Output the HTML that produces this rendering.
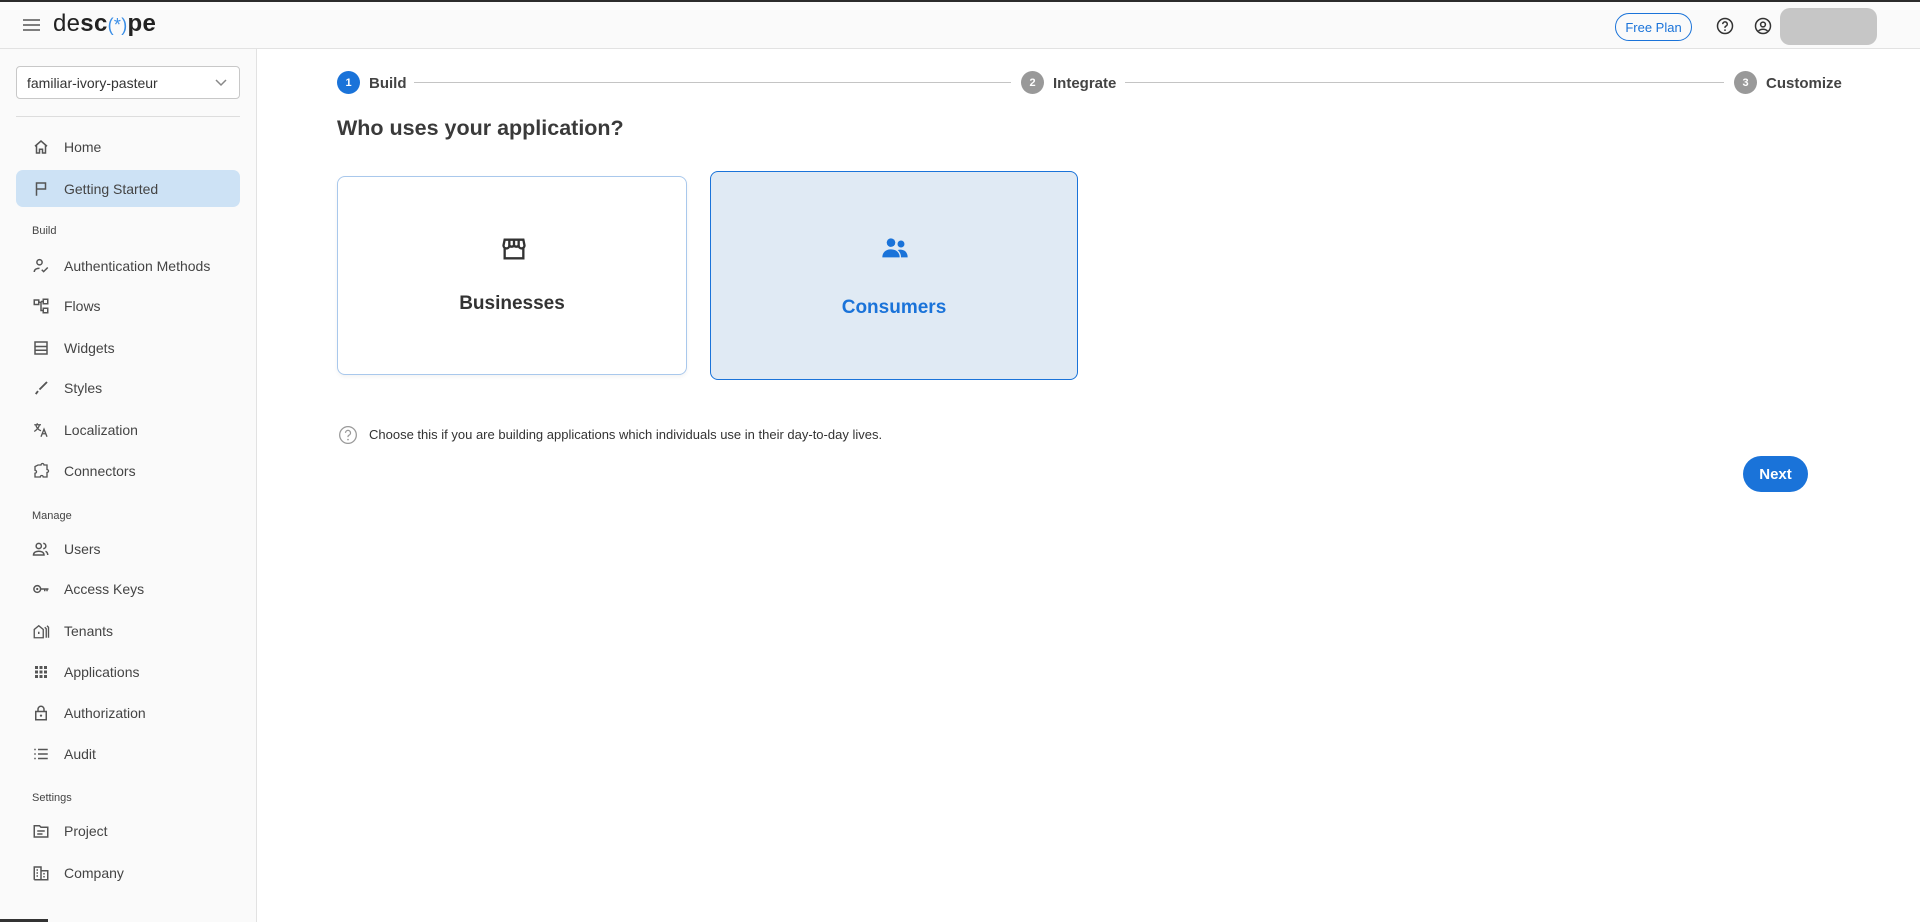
<!DOCTYPE html>
<html><head><meta charset="utf-8"><style>
*{box-sizing:border-box;margin:0;padding:0}
body{width:1920px;height:922px;overflow:hidden;background:#fff;font-family:"Liberation Sans",sans-serif;color:#3a3a3a;position:relative}
.top{position:absolute;left:0;top:0;width:1920px;height:49px;background:#fafafa;border-top:2px solid #2b2b2b;border-bottom:1px solid #e2e2e2}
.side{position:absolute;left:0;top:49px;width:257px;height:873px;background:#fafafa;border-right:1px solid #e2e2e2}
.abs{position:absolute}
.nav{position:absolute;left:40px;font-size:14px;color:#444;display:flex;align-items:center;height:20px}
.nav svg{width:18px;height:18px;margin-right:0;position:absolute;left:-8px}
.nav span{position:absolute;left:24px;white-space:nowrap}
.sec{position:absolute;left:32px;font-size:11px;color:#444}
.circ{position:absolute;width:23px;height:23px;border-radius:50%;color:#fff;font-size:11px;font-weight:bold;display:flex;align-items:center;justify-content:center;top:71px}
.stl{position:absolute;top:75px;font-size:15px;font-weight:bold;color:#444}
.line{position:absolute;top:82px;height:1px;background:#c4c4c4}
</style></head><body>
<div class="top">
  <svg class="abs" style="left:22px;top:16px" width="19" height="14" viewBox="0 0 19 14"><path d="M1 2h17M1 7h17M1 12h17" stroke="#555" stroke-width="1.6"/></svg>
  <div class="abs" style="left:53px;top:8px;font-size:24px;letter-spacing:0.3px;color:#222"><span style="font-weight:300">de</span><b>sc</b><span style="color:#3a8ee6;font-weight:300;font-size:18px">(*)</span><b>pe</b></div>
  <div class="abs" style="left:1615px;top:11px;width:77px;height:28px;border:1px solid #1a73d9;border-radius:14px;color:#1a73d9;font-size:13px;display:flex;align-items:center;justify-content:center">Free Plan</div>
  <svg class="abs" style="left:1716px;top:15px" width="18" height="18" viewBox="0 0 24 24"><circle cx="12" cy="12" r="10" fill="none" stroke="#333" stroke-width="2"/><path d="M9 9.5a3 3 0 1 1 4 2.8c-.8.4-1 1-1 1.7v.5" fill="none" stroke="#333" stroke-width="2"/><circle cx="12" cy="17.5" r="1.2" fill="#333"/></svg>
  <svg class="abs" style="left:1754px;top:15px" width="18" height="18" viewBox="0 0 24 24"><circle cx="12" cy="12" r="10" fill="none" stroke="#333" stroke-width="2"/><circle cx="12" cy="10" r="3.2" fill="none" stroke="#333" stroke-width="2"/><path d="M6 18.5c3-3 9-3 12 0" fill="none" stroke="#333" stroke-width="2"/></svg>
  <div class="abs" style="left:1780px;top:6px;width:97px;height:37px;border-radius:10px;background:#c6c6c6"></div>
</div>
<div class="side">
  <div class="abs" style="left:16px;top:17px;width:224px;height:33px;border:1px solid #c8c8c8;border-radius:4px;background:#fff;font-size:14px;color:#333;padding:8px 10px">familiar-ivory-pasteur
    <svg class="abs" style="right:12px;top:12px" width="12" height="8" viewBox="0 0 12 8"><path d="M1 1l5 5 5-5" fill="none" stroke="#888" stroke-width="1.5"/></svg></div>
  <div class="abs" style="left:16px;top:67px;width:224px;height:1px;background:#ddd"></div>
  <div class="abs" style="left:16px;top:121px;width:224px;height:37px;border-radius:7px;background:#cde2f5"></div>
</div>
<div class="nav" style="top:137px"><svg viewBox="0 0 24 24"><path d="M4 11l8-7 8 7M6 9.5V20h4v-5h4v5h4V9.5" fill="none" stroke="#555" stroke-width="2"/></svg><span>Home</span></div>
<div class="nav" style="top:179px"><svg viewBox="0 0 24 24"><path d="M6 21V4h12v8H7" fill="none" stroke="#555" stroke-width="2"/></svg><span>Getting Started</span></div>
<div class="sec" style="top:225px">Build</div>
<div class="nav" style="top:256px"><svg viewBox="0 0 24 24"><circle cx="10" cy="7" r="3.5" fill="none" stroke="#555" stroke-width="2"/><path d="M3 20c0-4 4-5 7-5M13 17l2.5 2.5L21 14" fill="none" stroke="#555" stroke-width="2"/></svg><span>Authentication Methods</span></div>
<div class="nav" style="top:296px"><svg viewBox="0 0 24 24"><path d="M3 4h6v6H3zM15 3h6v6h-6zM15 15h6v6h-6zM9 7h3v11h3M12 6h3" fill="none" stroke="#555" stroke-width="2"/></svg><span>Flows</span></div>
<div class="nav" style="top:338px"><svg viewBox="0 0 24 24"><rect x="4" y="4" width="16" height="16" fill="none" stroke="#555" stroke-width="2"/><path d="M4 10h16M4 15h16" stroke="#555" stroke-width="2"/></svg><span>Widgets</span></div>
<div class="nav" style="top:378px"><svg viewBox="0 0 24 24"><path d="M20 4L10 14M8 16l-3 4" stroke="#555" stroke-width="2.5"/></svg><span>Styles</span></div>
<div class="nav" style="top:420px"><svg viewBox="0 0 24 24"><path d="M3 5h9M7 3v2M5 5c1 4 4 7 7 8M10 5c-1 4-4 7-7 9M12 21l4-10 4 10M13.5 17h5" fill="none" stroke="#555" stroke-width="1.8"/></svg><span>Localization</span></div>
<div class="nav" style="top:461px"><svg viewBox="0 0 24 24"><path d="M8 4h4a2 2 0 0 1 4 0h4v6a2 2 0 0 1 0 4v6h-5a2 2 0 0 0-4 0H4v-5a2 2 0 0 0 0-4V6z" fill="none" stroke="#555" stroke-width="1.8"/></svg><span>Connectors</span></div>
<div class="sec" style="top:510px">Manage</div>
<div class="nav" style="top:539px"><svg viewBox="0 0 24 24"><circle cx="9" cy="8" r="3.5" fill="none" stroke="#555" stroke-width="2"/><path d="M2 20c0-4 4-5 7-5s7 1 7 5zM15 4.5a3.5 3.5 0 0 1 0 7M18 15c2 1 3 2 3 5" fill="none" stroke="#555" stroke-width="2"/></svg><span>Users</span></div>
<div class="nav" style="top:579px"><svg viewBox="0 0 24 24"><circle cx="7" cy="12" r="4.5" fill="none" stroke="#555" stroke-width="2"/><circle cx="7" cy="12" r="1.5" fill="#555"/><path d="M11.5 12H22M17 12v3M20 12v3" stroke="#555" stroke-width="2"/></svg><span>Access Keys</span></div>
<div class="nav" style="top:621px"><svg viewBox="0 0 24 24"><path d="M3 21V10l6-5 6 5v11zM17 7l2 2v12M20 5l2 2v14" fill="none" stroke="#555" stroke-width="1.8"/><rect x="8" y="13" width="2" height="3" fill="#555"/></svg><span>Tenants</span></div>
<div class="nav" style="top:662px"><svg viewBox="0 0 24 24"><g fill="#555"><rect x="4" y="4" width="4" height="4"/><rect x="10" y="4" width="4" height="4"/><rect x="16" y="4" width="4" height="4"/><rect x="4" y="10" width="4" height="4"/><rect x="10" y="10" width="4" height="4"/><rect x="16" y="10" width="4" height="4"/><rect x="4" y="16" width="4" height="4"/><rect x="10" y="16" width="4" height="4"/><rect x="16" y="16" width="4" height="4"/></g></svg><span>Applications</span></div>
<div class="nav" style="top:703px"><svg viewBox="0 0 24 24"><rect x="5" y="10" width="14" height="11" fill="none" stroke="#555" stroke-width="2"/><path d="M8 10V7a4 4 0 0 1 8 0v3" fill="none" stroke="#555" stroke-width="2"/><circle cx="12" cy="15.5" r="1.5" fill="#555"/></svg><span>Authorization</span></div>
<div class="nav" style="top:744px"><svg viewBox="0 0 24 24"><path d="M8 6h13M8 12h13M8 18h13" stroke="#555" stroke-width="2"/><g fill="#555"><rect x="3" y="5" width="2" height="2"/><rect x="3" y="11" width="2" height="2"/><rect x="3" y="17" width="2" height="2"/></g></svg><span>Audit</span></div>
<div class="sec" style="top:792px">Settings</div>
<div class="nav" style="top:821px"><svg viewBox="0 0 24 24"><path d="M3 5h7l2 2h9v13H3z" fill="none" stroke="#555" stroke-width="2"/><path d="M7 12h10M7 16h7" stroke="#555" stroke-width="2"/></svg><span>Project</span></div>
<div class="nav" style="top:863px"><svg viewBox="0 0 24 24"><path d="M3 21V4h9v17M12 9h9v12H3" fill="none" stroke="#555" stroke-width="2"/><g fill="#555"><rect x="6" y="7" width="2" height="2"/><rect x="6" y="11" width="2" height="2"/><rect x="6" y="15" width="2" height="2"/><rect x="15" y="12" width="2" height="2"/><rect x="15" y="16" width="2" height="2"/></g></svg><span>Company</span></div>
<div class="abs" style="left:0;top:919px;width:48px;height:3px;background:#333"></div>

<div class="circ" style="left:337px;background:#1a73d9">1</div>
<div class="stl" style="left:369px">Build</div>
<div class="line" style="left:414px;width:597px"></div>
<div class="circ" style="left:1021px;background:#999">2</div>
<div class="stl" style="left:1053px">Integrate</div>
<div class="line" style="left:1125px;width:599px"></div>
<div class="circ" style="left:1734px;background:#999">3</div>
<div class="stl" style="left:1766px">Customize</div>

<div class="abs" style="left:337px;top:116px;font-size:21.5px;font-weight:bold;color:#3a3a3a">Who uses your application?</div>

<div class="abs" style="left:337px;top:176px;width:350px;height:199px;border:1px solid #a9c8ec;border-radius:8px;background:#fff;box-shadow:0 2px 4px rgba(0,0,0,0.05)">
  <svg class="abs" style="left:162px;top:58px" width="28" height="28" viewBox="0 0 24 24"><path d="M4 4h16l1 5a2.5 2.5 0 0 1-5 0 2.5 2.5 0 0 1-4 0 2.5 2.5 0 0 1-4 0 2.5 2.5 0 0 1-5 0zM4 11v9h16v-9M8 4v5M12 4v5M16 4v5" fill="none" stroke="#333" stroke-width="2"/></svg>
  <div class="abs" style="left:0;width:100%;top:116px;text-align:center;font-size:19px;font-weight:bold;color:#333">Businesses</div>
</div>
<div class="abs" style="left:710px;top:171px;width:368px;height:209px;border:1px solid #1a73d9;border-radius:8px;background:#e0eaf4">
  <svg class="abs" style="left:168px;top:60px" width="32" height="32" viewBox="0 0 24 24"><g fill="#1a73d9"><circle cx="9" cy="8" r="3.2"/><circle cx="16.5" cy="9" r="2.6"/><path d="M2.5 19c0-4 3-6 6.5-6s6.5 2 6.5 6z"/><path d="M14 13.5c3.5-1 7.5.5 7.5 5.5H16.5c0-2.5-1-4.2-2.5-5.5z"/></g></svg>
  <div class="abs" style="left:0;width:100%;top:125px;text-align:center;font-size:19px;font-weight:bold;color:#1a73d9">Consumers</div>
</div>

<svg class="abs" style="left:338px;top:425px" width="20" height="20" viewBox="0 0 24 24"><circle cx="12" cy="12" r="10" fill="none" stroke="#999" stroke-width="1.5"/><path d="M9 9.5a3 3 0 1 1 4 2.8c-.8.4-1 1-1 1.7v.5" fill="none" stroke="#999" stroke-width="1.5"/><circle cx="12" cy="17.5" r="1" fill="#999"/></svg>
<div class="abs" style="left:369px;top:427px;font-size:13px;color:#333">Choose this if you are building applications which individuals use in their day-to-day lives.</div>

<div class="abs" style="left:1743px;top:456px;width:65px;height:36px;border-radius:18px;background:#1a73d9;color:#fff;font-size:15px;font-weight:bold;display:flex;align-items:center;justify-content:center">Next</div>
</body></html>
